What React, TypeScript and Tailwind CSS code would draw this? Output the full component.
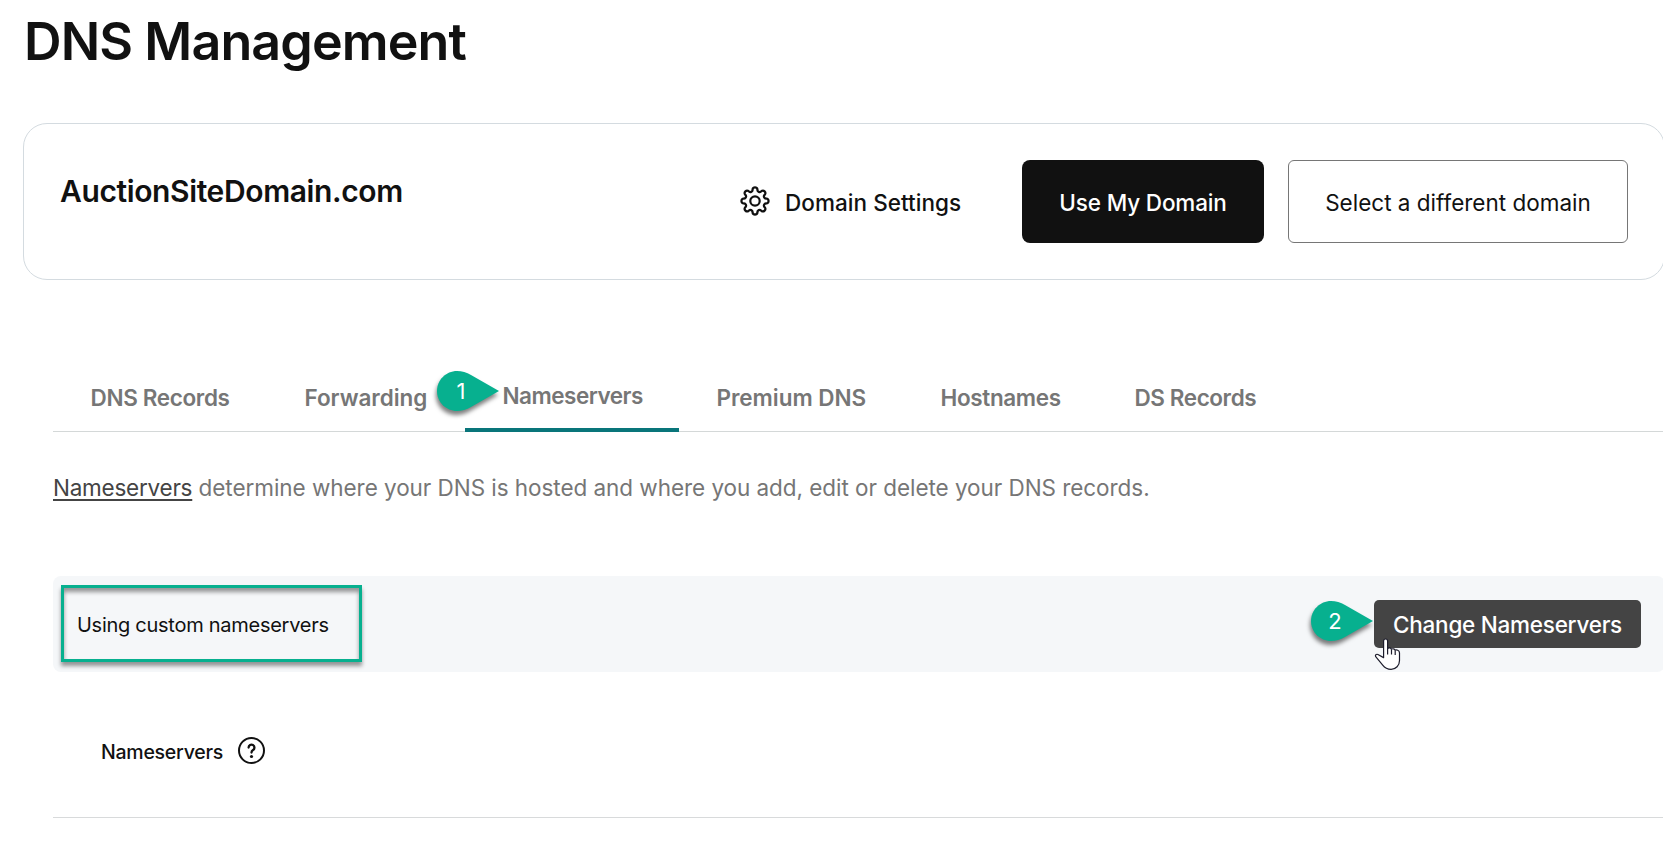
import type { ReactNode } from "react"

const tabs = [
  { label: "DNS Records", width: "w-[214px]", tracking: "tracking-[-0.35px]" },
  { label: "Forwarding", width: "w-[198px]", tracking: "tracking-[-0.05px]" },
  { label: "Nameservers", width: "w-[214px]", tracking: "tracking-[-0.5px]" },
  { label: "Premium DNS", width: "w-[224px]", tracking: "tracking-[-0.05px]" },
  { label: "Hostnames", width: "w-[194px]", tracking: "tracking-[-0.35px]" },
  { label: "DS Records", width: "w-[197px]", tracking: "tracking-[-0.42px]" },
]

// outline of an eight-toothed wheel: a convex arc per tooth, a concave one per gap
const point = (deg: number) => {
  const rad = (deg * Math.PI) / 180
  return `${(15 + 11.9 * Math.cos(rad)).toFixed(2)} ${(15 + 11.9 * Math.sin(rad)).toFixed(2)}`
}
const teeth = [0, 45, 90, 135, 180, 225, 270, 315]
const gearPath = `M${point(-12)}` + teeth.map((a) => `A2.55 2.55 0 0 1 ${point(a + 12)}A2.2 2.2 0 0 0 ${point(a + 33)}`).join("") + "Z"

const GearIcon = () => (
  <svg className="-mt-[2px] h-[30px] w-[30px]" viewBox="0 0 30 30" fill="none" stroke="#111" strokeWidth="2.2" strokeLinejoin="round">
    <path d={gearPath} />
    <circle cx="15" cy="15" r="4.7" />
  </svg>
)

const HelpIcon = () => (
  <svg className="h-[27px] w-[27px]" viewBox="0 0 27 27" fill="none" stroke="#111" strokeWidth="2">
    <circle cx="13.5" cy="13.5" r="12.5" />
    <path d="M10.6 10.6a2.9 2.9 0 1 1 4.4 2.5c-1 .6-1.5 1.1-1.5 2.4" strokeWidth="2.3" strokeLinecap="round" />
    <circle cx="13.5" cy="19.5" r="1.6" fill="#111" stroke="none" />
  </svg>
)

const Cursor = () => (
  <svg className="absolute left-0 top-[37px] h-[34px] w-[27px]" viewBox="0 0 27 34">
    <path
      d="M9.6 20.6V4a2 2 0 0 1 4 0v7.6c.6-1 3.2-.9 3.8.6.9-.8 3.2-.5 3.7 1 1.2-.6 4.4-.1 4.4 2.8v7.5c0 5-3.6 8.8-8.4 8.8-3.8 0-6.2-1.3-8.4-4.2L1.7 19.7c-.9-1.5.6-3 2.2-2.2z"
      fill="#fff"
      stroke="#1c1c2b"
      strokeWidth="1.2"
      strokeLinejoin="round"
    />
    <path d="M13.6 11.5v6M17.5 12.5v5M21.2 13.5v4.5" stroke="#1c1c2b" strokeWidth="1.2" />
  </svg>
)

const Marker = ({ children, className }: { children: ReactNode; className: string }) => (
  <div className={`absolute h-10 w-[62px] ${className}`}>
    <svg className="overflow-visible drop-shadow-[-1px_4px_2px_rgba(0,0,0,0.5)]" width="62" height="40" viewBox="0 0 62 40">
      <path d="M20 0C9 0 0 9 0 20s9 20 20 20c5 0 9.5-1.5 14-4L62 20 34 4C29.5 1.5 25 0 20 0z" fill="#07b08f" />
    </svg>
    <span className="absolute left-0 top-0 w-12 text-center text-[22px] leading-[40px] tracking-normal text-white">{children}</span>
  </div>
)

const App = () => {
  return (
    <div className="h-[848px] w-full overflow-hidden bg-white font-[Inter,'Liberation_Sans',sans-serif] text-[#111]">
      <h1 className="ml-[24px] pt-[10px] text-[52px] font-semibold leading-[64px] tracking-[-0.9px]">DNS Management</h1>

      {/* Domain card */}
      <div className="ml-[23px] mt-[49px] flex h-[157px] w-[1642px] rounded-[24px] border border-[#d4dbe0] pl-[36px] pt-[36px]">
        <h2 className="w-[680px] pt-[10px] text-[30px] font-semibold leading-[42px] tracking-[-0.38px]">AuctionSiteDomain.com</h2>
        <div className="flex h-[83px] items-center">
          <div className="flex w-[282px] items-center">
            <GearIcon />
            <span className="ml-[15px] whitespace-nowrap pt-[2px] text-[22.5px] font-medium tracking-[0.05px]">Domain Settings</span>
          </div>
          <button className="h-[83px] w-[242px] rounded-lg bg-[#111] pt-[2px] text-[22.5px] font-medium tracking-[-0.15px] text-white">Use My Domain</button>
          <button className="ml-6 h-[83px] w-[340px] rounded-md border border-[#767676] pt-[2px] text-[22.5px]">Select a different domain</button>
        </div>
      </div>

      {/* Tabs */}
      <div className="ml-[53px] mt-[80px] flex h-[72px] w-[1612px] border-b border-[#d4d8d8] text-[22.5px] font-semibold text-[#767676]">
        {tabs.map((tab) => {
          const active = tab.label === "Nameservers"
          return (
            <div key={tab.label} className={`relative h-[72px] shrink-0 pl-[37.5px] leading-[28px] ${tab.width} ${active ? "border-b-4 border-[#09757a] pt-[22px]" : "pt-[24px]"}`}>
              <span className={`whitespace-nowrap ${tab.tracking}`}>{tab.label}</span>
              {active && <Marker className="-left-[28px] top-[11px] font-normal">1</Marker>}
            </div>
          )
        })}
      </div>

      <p className="ml-[53px] mt-[42px] text-[22.5px] leading-[28px] tracking-[-0.05px] text-[#767676]">
        <a href="#" className="tracking-[-0.24px] text-[#444] underline decoration-2 underline-offset-3">Nameservers</a> determine where your DNS is hosted and where you add, edit or delete your DNS records.
      </p>

      {/* Status bar */}
      <div className="ml-[53px] mt-[74px] flex h-24 w-[1612px] justify-between rounded-lg bg-[#f5f7f9]">
        <div className="ml-2 mt-[9px] h-[77px] w-[301px] border-3 border-[#07b08f] pl-[13px] text-[20px] leading-[75px] tracking-[-0.27px] shadow-[0_4px_4px_rgba(0,0,0,0.4),inset_0_4px_4px_rgba(0,0,0,0.4)]">
          Using custom nameservers
        </div>
        <div className="relative mr-6 mt-6 h-12">
          <button className="h-12 w-[267px] rounded-[5px] bg-[#444] pt-[2px] text-[22.5px] font-medium tracking-[-0.25px] text-white">Change Nameservers</button>
          <Marker className="-left-[63px] top-px">2</Marker>
          <Cursor />
        </div>
      </div>

      <div className="ml-[53px] flex h-[146px] w-[1612px] items-center border-b border-[#d8dadb] pl-[48px] pt-[12px]">
        <span className="w-[137px] pt-1 text-[19.5px] font-medium tracking-[-0.25px]">Nameservers</span>
        <HelpIcon />
      </div>
    </div>
  )
}

export default App
